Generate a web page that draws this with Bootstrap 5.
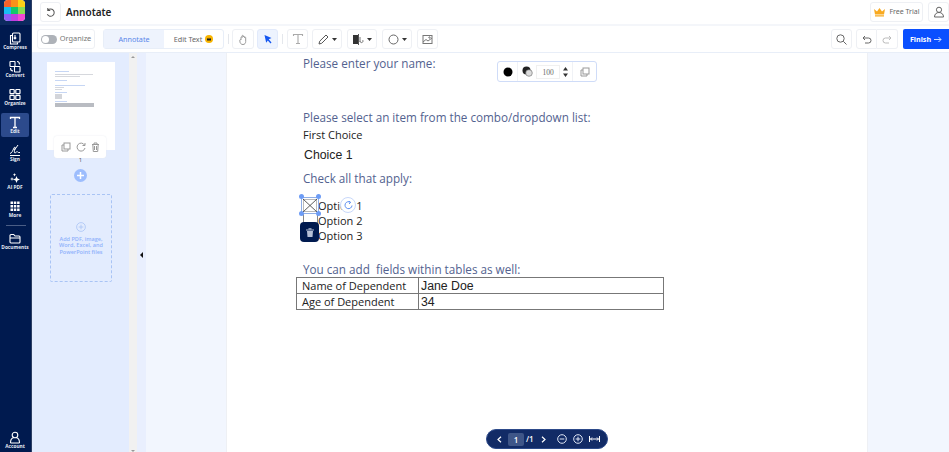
<!DOCTYPE html>
<html lang="en">
<head>
<meta charset="utf-8">
<title>Annotate</title>
<link href="https://cdn.jsdelivr.net/npm/bootstrap@5.3.0/dist/css/bootstrap.min.css" rel="stylesheet">
<style>
html,body{height:452px;overflow:hidden;margin:0}
body{font-family:"Open Sans","Noto Sans",sans-serif;background:#fff;color:#333}
svg{display:block}
.rail{width:32px;height:452px;background:#001a4f;color:#fff;flex:none;border-right:1px solid #2c3e63}
.logo-wrap{height:25px;background:#0c2a5e;padding:0 4px}
.logo-grid{width:21px;height:21px;display:grid;grid-template-columns:repeat(3,7px);grid-template-rows:repeat(3,7px);border-radius:4px;overflow:hidden;background:#fff}
.rail-item{width:28px;height:24px;margin:0 0 4px 1px;border-radius:2px;display:flex;flex-direction:column;align-items:center;justify-content:flex-start;padding-top:3px;font-size:4.8px;font-weight:700;line-height:7px;white-space:nowrap;color:#e6eaf4}
.rail-item svg{margin-bottom:-1px;flex:none}
.rail-on{background:#2c4a8c}
.rail-sep{width:20px;height:1px;background:#4a5d85;margin:0 auto 3px}
.topbar{height:26px;border-bottom:2px solid #f4f6fa;padding-left:8px}
.tb-btn{height:20px;min-width:21px;border:1px solid #eef0f4;border-radius:3px;background:#fff;display:flex;align-items:center;justify-content:center;gap:3px;color:#666;flex:none}
.title-txt{font-family:"Noto Sans",sans-serif;font-size:10px;font-weight:600;color:#222;margin-left:5px}
.freebox{width:53px;margin-right:5px;font-size:7px;color:#666;font-family:"Noto Sans",sans-serif}
.toolbar{height:27px;border-bottom:1px solid #e8eef8;padding:3px 0 3px 5px}
.tog{width:58px;font-size:7.4px;color:#777;font-family:"Noto Sans",sans-serif;margin-top:0}
.switch-mini{width:16px;height:9px;border-radius:5px;background:#aeb2b8;position:relative}
.switch-mini::after{content:"";position:absolute;left:1px;top:1px;width:7px;height:7px;border-radius:50%;background:#fff}
.seg{width:121px;height:20px;margin-left:8px;border:1px solid #e8eef8;border-radius:3px;display:flex;font-size:7.2px;font-family:"Noto Sans",sans-serif;color:#666;flex:none}
.seg>div{display:flex;align-items:center;justify-content:center;gap:3px}
.seg-a{width:60px;background:#eef3fd;color:#5a86ea}
.seg-b{flex:1}
.vsep{width:1px;height:10px;background:#e4e7ec;margin:0 3px 0 4px;flex:none}
.tb-on{background:#edf3fe;border-color:#e2eafb}
.finish{width:46px;height:20px;background:#0a4fff;color:#fff;font-size:7.2px;font-weight:700;border-radius:2px 0 0 2px;gap:3px;margin-left:5px;font-family:"Noto Sans",sans-serif}
.work{height:399px;min-height:0}
.pane{width:97px;background:#e3ecfe;position:relative;flex:none}
.thumb{position:absolute;left:15px;top:9px;width:68px;height:88px;background:#fff;padding:9px 9px 0 8px}
.tl{height:1px;background:#d6d8dd;margin-bottom:1px}
.thumb-tools{position:absolute;left:22px;top:83px;width:52px;height:22px;background:#fff;border-radius:3px;box-shadow:0 0 2px #e6e9f0;display:flex;align-items:center;justify-content:space-around;padding:0 4px}
.pg-no{position:absolute;left:0;width:97px;top:103px;text-align:center;font-size:6px;color:#555}
.add-c{position:absolute;left:42px;top:116px;width:13px;height:13px;border-radius:50%;background:#9dbdfd}
.add-box{position:absolute;left:18px;top:141px;width:62px;height:88px;border:1px dashed #a9c4f5;border-radius:2px;text-align:center;font-size:5.5px;line-height:6.3px;color:#8fb1fb;font-weight:600;padding-top:27px}
.add-box svg{margin:0 auto 4px}
.sbar{width:8px;background:#f1f1f1;flex:none;position:relative}
.sb-up,.sb-dn{position:absolute;left:2px;width:0;height:0;border:2px solid transparent}
.sb-up{top:3px;border-bottom:2px solid #999;border-top:0}
.sb-dn{bottom:0;border-top:2px solid #999;border-bottom:0}
.strip{width:9px;background:#e9effe;flex:none;position:relative}
.tri{position:absolute;left:3px;top:199px;width:0;height:0;border:3px solid transparent;border-right-color:#111;border-left:0}
.gutter{background:#f2f6fe;flex:none}
.g-l{width:80px}.g-r{width:81px}
.docpage{width:642px;background:#fff;padding-left:76px;font-size:11.7px;color:#53628f;position:relative;border-left:1px solid #eef0f4;border-right:1px solid #eef0f4}
.docline{line-height:18px;white-space:nowrap}
.dk{color:#222;font-size:11px}
.arial{font-family:"Liberation Sans",sans-serif;font-size:12.3px;color:#222}
.doc-tb{position:relative;left:-7px;width:368px;margin:0;border-collapse:collapse;font-size:11px;color:#222}
.doc-tb td{border:1px solid #777;height:16px;padding:0 5px;line-height:14px;white-space:nowrap}
.doc-tb td:first-child{width:122px}
.doc-tb td.arial{padding:0 2px}
.ops{position:absolute;left:270px;top:8px;width:100px;height:21px;background:#fff;border:1px solid #cfdcf8;border-radius:3px;display:flex;align-items:center;color:#555}
.ops-c{display:flex;align-items:center;justify-content:center;height:100%;flex:none}
.ops-1{width:20px;border-right:1px solid #f0f2f6}
.ops-2{width:55px;border-right:1px solid #f0f2f6}
.ops-3{flex:1}
.opn{width:24px;height:14px;border:1px solid #f0f0f0;font-size:7.500px;text-align:center;line-height:13px;margin:0 3px;font-family:"Liberation Serif",serif;color:#666}
.sel-box{position:absolute;left:74px;top:144px;width:18px;height:17px;border:1px solid #8faee6;padding:1px}
.chk-low{position:absolute;left:76px;top:160px;width:15px;height:10px;border-left:1px solid #888;border-right:1px solid #888}
.hnd{position:absolute;width:5px;height:5px;border-radius:50%;background:#6d9cf5}
.rot{position:absolute;left:113px;top:144px;width:16px;height:16px;border-radius:50%;background:#fff;border:1px solid #c8d8fa;display:flex;align-items:center;justify-content:center}
.trash-b{position:absolute;left:73px;top:169px;width:19px;height:20px;border-radius:4px;background:#001a4f;display:flex;align-items:center;justify-content:center}
.navpill{position:absolute;left:259px;top:376px;width:122px;height:20px;border-radius:10px;background:#122b66;border:1px solid #2d4a8a;color:#fff;font-size:8px;font-weight:600;display:flex;align-items:center;padding-left:10px}
.pgbox{width:16px;height:13px;background:#3f5688;border-radius:2px;text-align:center;line-height:13px;margin:0 2px 0 6px}
</style>
</head>
<body class="d-flex">
<nav class="rail d-flex flex-column">
  <div class="logo-wrap mb-1"><div class="logo-grid">
    <i style="background:#f7622b"></i><i style="background:#f9911b"></i><i style="background:#fdd116"></i>
    <i style="background:#18bdf3"></i><i style="background:#13c86b"></i><i style="background:#8ade52"></i>
    <i style="background:#8d5cf6"></i><i style="background:#c03fe0"></i><i style="background:#f448d4"></i>
  </div></div>
  <div class="rail-item"><svg width="12" height="13" viewBox="0 0 12 13" fill="none" stroke="#fff" stroke-width="1.1"><rect x="3.5" y="1" width="7.5" height="9" rx="1"/><path d="M3 3.5H1.5v8.5h7v-1.5M6 3v4m-1.300-1.300L6 7l1.300-1.300"/></svg>Compress</div>
  <div class="rail-item"><svg width="12" height="13" viewBox="0 0 12 13" fill="none" stroke="#fff" stroke-width="1.1"><rect x="1" y="1.500" width="5" height="5" rx=".5"/><rect x="5.500" y="6.500" width="5.500" height="5.500" rx=".5"/><path d="M8 1.500c1.500 0 2.500 1 2.500 3M1.500 8c0 2 1 3 2.500 3"/></svg>Convert</div>
  <div class="rail-item"><svg width="12" height="13" viewBox="0 0 12 13" fill="none" stroke="#fff" stroke-width="1.2"><rect x="1" y="1.500" width="4.200" height="4.200" rx=".6"/><rect x="6.800" y="1.500" width="4.200" height="4.200" rx=".6"/><rect x="1" y="7.300" width="4.200" height="4.200" rx=".6"/><rect x="6.800" y="7.300" width="4.200" height="4.200" rx=".6"/></svg>Organize</div>
  <div class="rail-item rail-on"><svg width="12" height="13" viewBox="0 0 12 13" fill="none" stroke="#fff" stroke-width="1.300"><path d="M1.500 3V1.500h9V3M6 1.500V11.500M4 11.500h4"/></svg>Edit</div>
  <div class="rail-item"><svg width="12" height="13" viewBox="0 0 12 13" fill="none" stroke="#fff" stroke-width="1"><path d="M1 9.500c2-.5 2.500-2.500 4-5.500.7-1.500 1.500-1 1 .5-.7 2.500-1 4.500 0 4.500s1.300-1.500 2-1.500.7 1.500 3 1M9 1L5.500 6M1 11.500h10"/></svg>Sign</div>
  <div class="rail-item"><svg width="12" height="13" viewBox="0 0 12 13" fill="#fff"><path d="M7.500 4l1 2.500L11 7.500 8.500 8.500l-1 2.500-1-2.500L4 7.500l2.500-1zM3 5l.5 1.500L5 7 3.500 7.500 3 9l-.5-1.500L1 7l1.500-.5zM5.500 1l.5 1.200 1.200.5-1.200.5-.5 1.200-.5-1.200-1.200-.5 1.200-.5z"/></svg>AI PDF</div>
  <div class="rail-item"><svg width="12" height="13" viewBox="0 0 12 13" fill="#fff"><path d="M1.500 1.500h2.500v2.500H1.500zm3.300 0h2.500v2.500H4.800zm3.300 0h2.500v2.500H8.100zM1.500 5h2.500v2.500H1.500zm3.300 0h2.500v2.500H4.800zm3.300 0h2.500v2.500H8.100zM1.500 8.500h2.500V11H1.500zm3.300 0h2.500V11H4.800zm3.300 0h2.500V11H8.100z"/></svg>More</div>
  <div class="rail-sep"></div>
  <div class="rail-item"><svg width="12" height="13" viewBox="0 0 12 13" fill="none" stroke="#fff" stroke-width="1.100"><path d="M1 3.500a1 1 0 0 1 1-1h2.700L6 4h4a1 1 0 0 1 1 1v5a1 1 0 0 1-1 1H2a1 1 0 0 1-1-1zM1 6h10"/></svg>Documents</div>
  <div class="rail-item mt-auto mb-0"><svg width="12" height="13" viewBox="0 0 12 13" fill="none" stroke="#fff" stroke-width="1.100"><circle cx="6" cy="4" r="2.800"/><path d="M1.500 12c0-3 1.500-5 2.800-5.300M10.500 12c0-3-1.500-5-2.800-5.300M1.500 12h9"/></svg>Account</div>
</nav>
<div class="flex-grow-1 d-flex flex-column" style="min-width:0">
  <header class="topbar d-flex align-items-center">
    <div class="tb-btn"><svg width="11" height="11" viewBox="0 0 12 12" fill="none" stroke="#555" stroke-width="1.100"><path d="M3 3.500A4 4 0 1 1 2.500 8M3 1v2.700h2.700"/></svg></div>
    <span class="title-txt">Annotate</span>
    <div class="tb-btn freebox ms-auto"><svg width="13" height="10" viewBox="0 0 13 10" fill="#f8a91f"><path d="M1 2l3 2.500L6.500 1 9 4.500 12 2l-1 5.500H2zM2 8.200h9V9.500H2z"/></svg>Free Trial</div>
    <div class="tb-btn"><svg width="12" height="12" viewBox="0 0 12 12" fill="none" stroke="#666"><circle cx="6" cy="3.800" r="2.600"/><path d="M1.500 11c0-3 2-4.500 4.500-4.500s4.500 1.500 4.500 4.500z"/></svg></div>
  </header>
  <div class="toolbar d-flex align-items-center">
    <div class="tb-btn tog"><span class="switch-mini"></span>Organize</div>
    <div class="seg"><div class="seg-a">Annotate</div><div class="seg-b">Edit Text <svg width="8" height="8" viewBox="0 0 8 8"><circle cx="4" cy="4" r="4" fill="#f8b400"/><path d="M2 5.500V3l1.200 1L4 2.500 4.800 4 6 3v2.500z" fill="#222"/></svg></div></div>
    <span class="vsep"></span>
    <div class="tb-btn" style="width:22px"><svg width="11" height="11" viewBox="0 0 11 11" fill="none" stroke="#999"><path d="M3 6V3.500c0-.9 1.100-.9 1.100 0V2c0-.9 1.200-.9 1.200 0v1c0-.9 1.200-.9 1.200 0v.7c0-.9 1.200-.9 1.200 0V7.500c0 1.700-1 3-2.700 3-1.500 0-2.200-.7-2.800-1.700L1.800 6.800c-.5-1 .6-1.500 1.200-.8z"/></svg></div>
    <div class="tb-btn tb-on" style="width:21px;margin-left:3px"><svg width="10" height="10" viewBox="0 0 10 10" fill="#1456f0"><path d="M1.500 1l7 3-2.800 1.200L8.500 8.500l-1 1-2.700-3L3.200 8.800z"/></svg></div>
    <span class="vsep" style="margin:0 4px"></span>
    <div class="tb-btn" style="width:21px"><svg width="12" height="12" viewBox="0 0 12 12" fill="none" stroke="#aaa" stroke-width="1.100"><path d="M1.500 3V1.500h9V3M6 1.500V10.500M4 10.500h4"/></svg></div>
    <div class="tb-btn" style="width:30px;margin-left:4px"><svg width="11" height="11" viewBox="0 0 11 11" fill="none" stroke="#555"><path d="M1 10l.7-2.800L8 1l2 2-6.300 6.300z"/></svg><svg width="5" height="3" viewBox="0 0 5 3" fill="#333"><path d="M0 0h5L2.500 3z"/></svg></div>
    <div class="tb-btn" style="width:30px;margin-left:5px"><svg width="11" height="11" viewBox="0 0 11 11"><rect x="0" y="1" width="5.500" height="9" fill="#333"/><path d="M5.500 0v11" stroke="#555"/><path d="M7 3v5M7 7a1.500 1.500 0 1 0 2.500-1" stroke="#777" fill="none"/></svg><svg width="5" height="3" viewBox="0 0 5 3" fill="#333"><path d="M0 0h5L2.500 3z"/></svg></div>
    <div class="tb-btn" style="width:30px;margin-left:5px"><svg width="11" height="11" viewBox="0 0 11 11" fill="none" stroke="#666"><circle cx="5.500" cy="5.500" r="4.500"/></svg><svg width="5" height="3" viewBox="0 0 5 3" fill="#333"><path d="M0 0h5L2.500 3z"/></svg></div>
    <div class="tb-btn" style="width:21px;margin-left:5px"><svg width="11" height="11" viewBox="0 0 11 11" fill="none" stroke="#777"><rect x="1" y="1.500" width="9" height="8"/><path d="M1 8l3-2.500 2 1.500 4-3"/><circle cx="7.500" cy="3.500" r=".7"/></svg></div>
    <div class="tb-btn ms-auto" style="width:21px"><svg width="11" height="11" viewBox="0 0 11 11" fill="none" stroke="#666"><circle cx="4.500" cy="4.500" r="3.700"/><path d="M7.300 7.300L10.500 10.500"/></svg></div>
    <div class="d-flex" style="margin-left:4px">
      <div class="tb-btn" style="border-radius:3px 0 0 3px"><svg width="10" height="9" viewBox="0 0 10 9" fill="none" stroke="#666"><path d="M3 1L1 3l2 2M1 3h5.500a2.500 2.500 0 0 1 0 5H3"/></svg></div>
      <div class="tb-btn" style="border-left:0;border-radius:0 3px 3px 0"><svg width="10" height="9" viewBox="0 0 10 9" fill="none" stroke="#bbb"><path d="M7 1l2 2-2 2M9 3H3.500a2.500 2.500 0 0 0 0 5H7"/></svg></div>
    </div>
    <div class="finish d-flex align-items-center justify-content-center">Finish <svg width="8" height="7" viewBox="0 0 8 7" fill="none" stroke="#cfe0ff"><path d="M0 3.500h7M4.500 1L7 3.500 4.500 6"/></svg></div>
  </div>
  <div class="work d-flex">
    <aside class="pane">
      <div class="thumb">
        <div class="tl" style="width:14px;background:#c6d6f4;margin-bottom:2px"></div>
        <div class="tl" style="width:38px"></div><div class="tl" style="width:25px;margin-bottom:3px"></div>
        <div class="tl" style="width:12px;background:#c6d6f4;margin-bottom:4px"></div>
        <div class="tl" style="width:30px;background:#c6d6f4"></div><div class="tl" style="width:9px"></div><div class="tl" style="width:7px;margin-bottom:2px"></div>
        <div class="tl" style="width:12px;background:#c6d6f4"></div>
        <div style="width:7px;height:5px;background:#d3d5da;margin-bottom:2px"></div>
        <div class="tl" style="width:12px;background:#c6d6f4"></div>
        <div class="tl" style="width:39px;height:4px;background:#b9bcc2;margin-bottom:0"></div>
      </div>
      <div class="thumb-tools">
        <svg width="10" height="10" viewBox="0 0 10 10" fill="none" stroke="#999"><rect x="3" y="1" width="6" height="6"/><path d="M3 3H1v6h6V7"/></svg>
        <svg width="10" height="10" viewBox="0 0 10 10" fill="none" stroke="#999"><path d="M8.500 3A4 4 0 1 0 9 6M9 1v2.500H6.500"/></svg>
        <svg width="9" height="10" viewBox="0 0 9 10" fill="none" stroke="#999"><path d="M1 2.500h7M3 2.500V1h3v1.500M1.800 2.500l.5 7h4.400l.5-7M3.500 4v4M5.500 4v4"/></svg>
      </div>
      <div class="pg-no">1</div>
      <div class="add-c"><svg width="13" height="13" viewBox="0 0 13 13" stroke="#fff" stroke-width="1.500"><path d="M6.500 3v7M3 6.500h7"/></svg></div>
      <div class="add-box"><svg width="10" height="10" viewBox="0 0 10 10" fill="none" stroke="#a9c4f5" stroke-width=".8"><circle cx="5" cy="5" r="4.400"/><path d="M5 2.700v4.600M2.700 5h4.600"/></svg>Add PDF, image,<br>Word, Excel, and<br>PowerPoint files</div>
    </aside>
    <div class="sbar"><span class="sb-up"></span><span class="sb-dn"></span></div>
    <div class="strip"><span class="tri"></span></div>
    <div class="gutter g-l"></div>
    <section class="docpage">
      <div class="docline" style="margin-top:1px">Please enter your name:</div>
      <div class="docline" style="margin-top:36px">Please select an item from the combo/dropdown list:</div>
      <div class="docline dk">First Choice</div>
      <div class="docline arial" style="margin:2px 0 0 1px">Choice 1</div>
      <div class="docline" style="margin-top:5px">Check all that apply:</div>
      <div style="margin-top:11px;padding-left:15px" class="dk">
        <div class="docline" style="line-height:15px">Option 1</div>
        <div class="docline" style="line-height:15px">Option 2</div>
        <div class="docline" style="line-height:15px">Option 3</div>
      </div>
      <div class="docline" style="margin-top:17px;margin-bottom:-1px">You can add&nbsp; fields within tables as well:</div>
      <table class="doc-tb"><tr><td>Name of Dependent</td><td class="arial">Jane Doe</td></tr><tr><td>Age of Dependent</td><td class="arial">34</td></tr></table>
      <div class="ops">
        <div class="ops-c ops-1"><svg width="10" height="10" viewBox="0 0 10 10"><circle cx="5" cy="5" r="4.500" fill="#000"/></svg></div>
        <div class="ops-c ops-2"><svg width="11" height="11" viewBox="0 0 11 11"><circle cx="4.500" cy="4.500" r="4" fill="#222"/><circle cx="7" cy="7" r="3.300" fill="#ddd" stroke="#666" stroke-width=".6"/></svg><span class="opn">100</span><svg width="5" height="10" viewBox="0 0 5 10" fill="#333"><path d="M2.500 0L5 3.500H0zM2.500 10L0 6.500h5z"/></svg></div>
        <div class="ops-c ops-3"><svg width="10" height="10" viewBox="0 0 10 10" fill="none" stroke="#999"><rect x="3" y="1" width="6" height="6"/><path d="M3 3H1v6h6V7"/></svg></div>
      </div>
      <span class="chk-low"></span>
      <div class="sel-box"><svg width="14" height="13" viewBox="0 0 14 13" stroke="#333" stroke-width=".8"><rect x=".5" y=".5" width="13" height="12" fill="none" stroke="#aaa"/><path d="M0 0l14 13M14 0L0 13"/></svg></div>
      <span class="hnd" style="left:72px;top:141px"></span><span class="hnd" style="left:89px;top:141px"></span><span class="hnd" style="left:72px;top:158px"></span><span class="hnd" style="left:89px;top:158px"></span>
      <div class="rot"><svg width="9" height="9" viewBox="0 0 9 9" fill="none" stroke="#5d8ef0"><path d="M6.500 1.300A3.500 3.500 0 1 0 8 4.500M4.500 0l2 1.300-1.300 1.700"/></svg></div>
      <div class="trash-b"><svg width="8" height="9" viewBox="0 0 8 9" fill="#b6c0d6"><path d="M0 1.500h8v1H0zM2.500.2h3v1h-3zM1 3h6l-.5 6h-5z"/></svg></div>
      <div class="navpill">
        <svg width="5" height="7" viewBox="0 0 5 7" fill="none" stroke="#fff" stroke-width="1.200"><path d="M4 .7L1 3.500 4 6.300"/></svg>
        <span class="pgbox">1</span><span>/1</span>
        <svg width="5" height="7" viewBox="0 0 5 7" fill="none" stroke="#fff" stroke-width="1.200" style="margin-left:7px"><path d="M1 .7L4 3.500 1 6.300"/></svg>
        <svg width="10" height="10" viewBox="0 0 10 10" fill="none" stroke="#dfe6f5" style="margin-left:11px"><circle cx="5" cy="5" r="4.300"/><path d="M2.700 5h4.600"/></svg>
        <svg width="10" height="10" viewBox="0 0 10 10" fill="none" stroke="#dfe6f5" style="margin-left:6px"><circle cx="5" cy="5" r="4.300"/><path d="M2.700 5h4.600M5 2.700v4.600"/></svg>
        <svg width="11" height="8" viewBox="0 0 11 8" fill="none" stroke="#fff" style="margin-left:6px"><path d="M.5 1v6M10.500 1v6M1.500 4h8M3 2.500L1.500 4 3 5.500M8 2.500L9.500 4 8 5.500"/></svg>
      </div>
    </section>
    <div class="gutter g-r flex-grow-1"></div>
  </div>
</div>
<script src="https://cdn.jsdelivr.net/npm/bootstrap@5.3.0/dist/js/bootstrap.bundle.min.js"></script>
</body>
</html>
